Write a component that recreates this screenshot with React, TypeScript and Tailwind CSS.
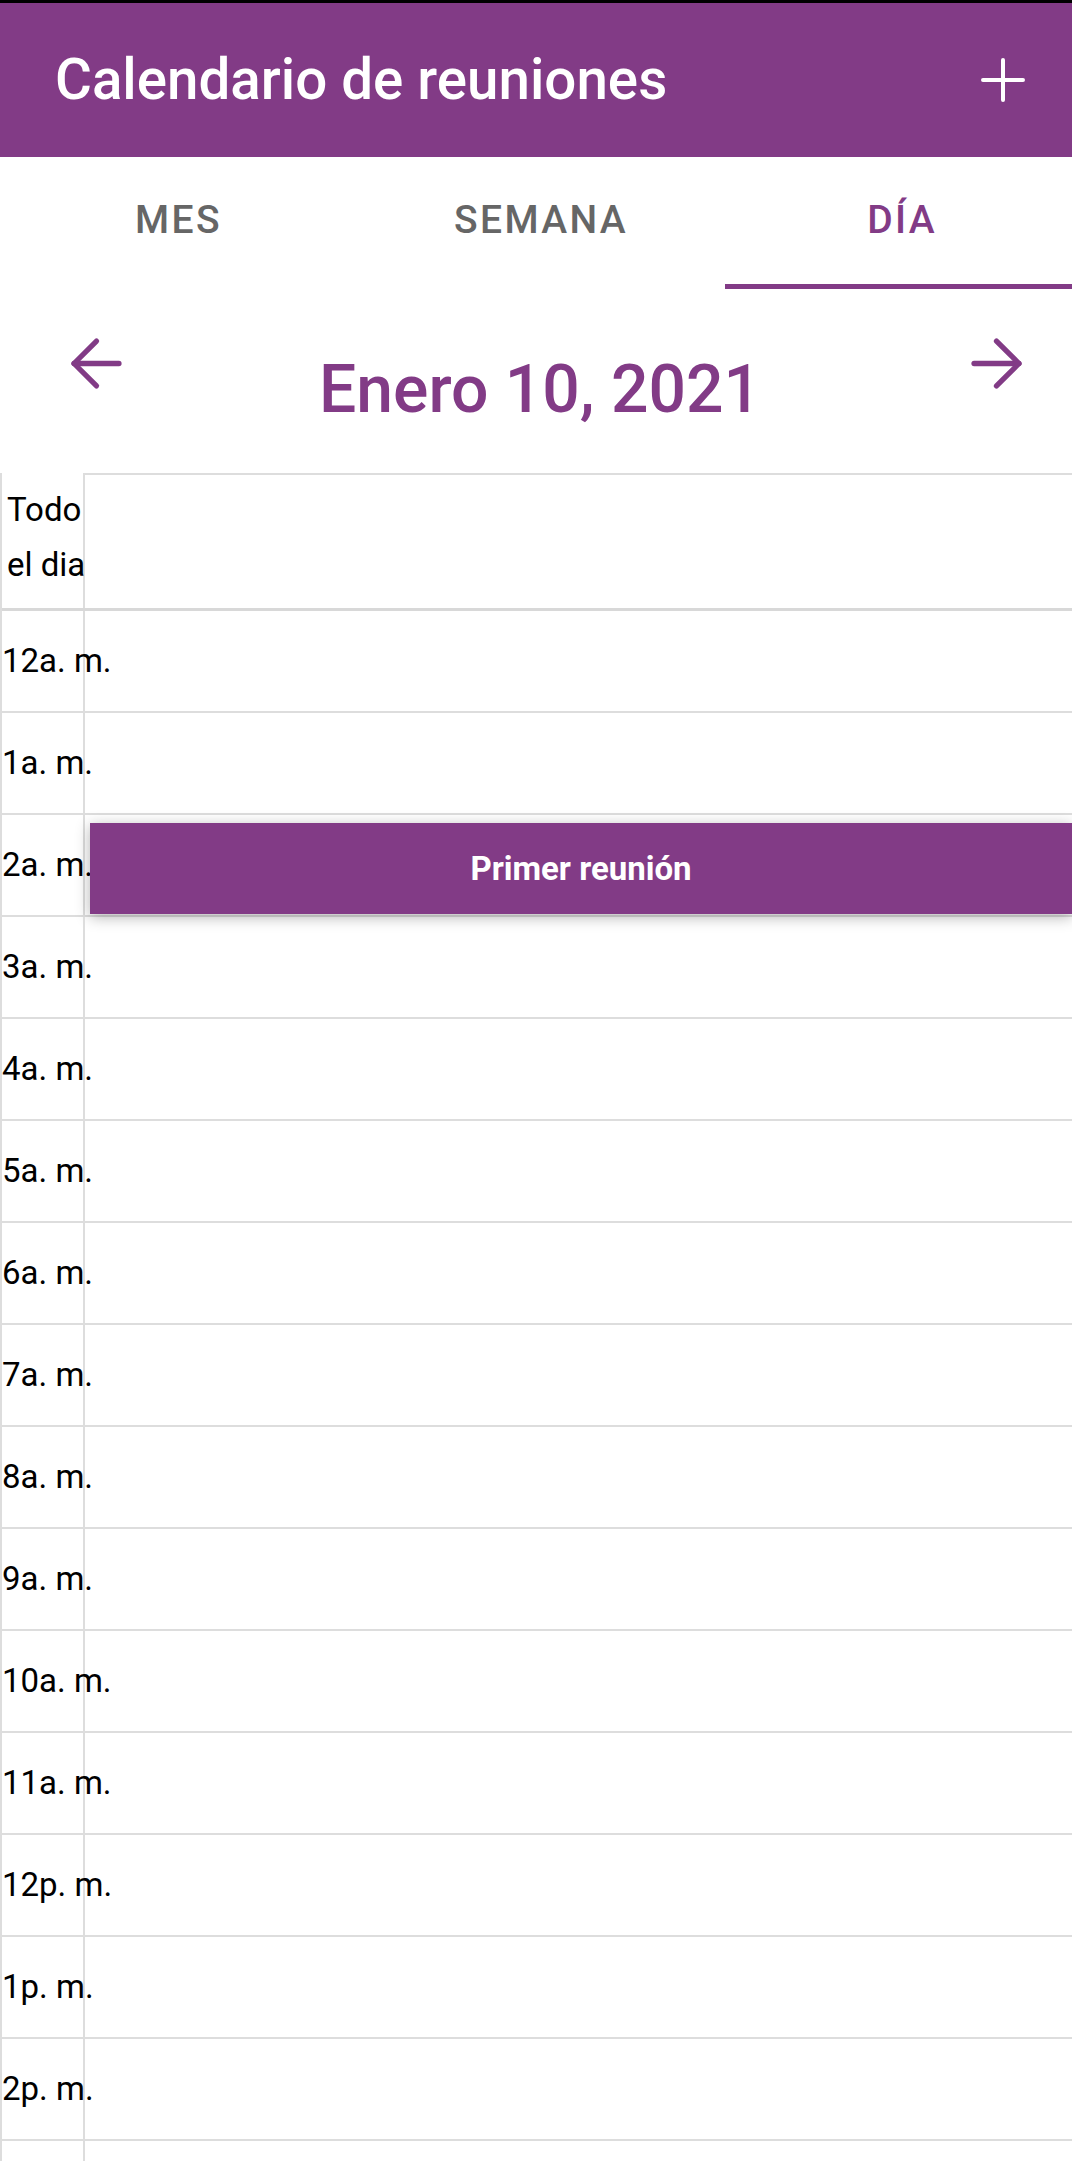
import { ArrowLeft, ArrowRight } from 'lucide-react';

const hours = [
  '12a. m.', '1a. m.', '2a. m.', '3a. m.', '4a. m.', '5a. m.', '6a. m.', '7a. m.',
  '8a. m.', '9a. m.', '10a. m.', '11a. m.', '12p. m.', '1p. m.', '2p. m.', '3p. m.',
  '4p. m.', '5p. m.', '6p. m.', '7p. m.', '8p. m.', '9p. m.', '10p. m.', '11p. m.',
];

const tabs = [
  { label: 'MES', active: false },
  { label: 'SEMANA', active: false },
  { label: 'DÍA', active: true },
];

export default function App() {
  return (
    <div className="flex h-screen flex-col overflow-hidden bg-white font-['Roboto',sans-serif]">
      <div className="h-[3px] bg-black" />

      <header className="flex h-[154px] shrink-0 items-center justify-between bg-[#823b86] pl-[55px] pr-[47px]">
        <h1 className="text-[56.5px] font-medium leading-none text-white">Calendario de reuniones</h1>
        <button className="text-white">
          <svg width="44" height="44" viewBox="0 0 44 44">
            <path d="M22 2v40M2 22h40" stroke="currentColor" strokeWidth="4" strokeLinecap="round" />
          </svg>
        </button>
      </header>

      <nav className="grid h-[132px] shrink-0 grid-cols-[357px_368px_1fr]">
        {tabs.map((tab) => (
          <div key={tab.label} className="flex flex-col">
            <div
              className={
                tab.active
                  ? 'flex flex-1 items-center justify-center pl-[7px] text-[39px] font-medium leading-none tracking-[0.06em] text-[#823b86]'
                  : 'flex flex-1 items-center justify-center text-[39px] font-medium leading-none tracking-[0.06em] text-[#666666]'
              }
            >
              {tab.label}
            </div>
            <div className={tab.active ? 'h-[5px] bg-[#823b86]' : 'h-[5px]'} />
          </div>
        ))}
      </nav>

      <div className="grid h-[184px] shrink-0 grid-cols-[1fr_auto_1fr] items-start pt-[36px] text-[#823b86]">
        <div className="pl-[58px]">
          <ArrowLeft size={77} strokeWidth={1.65} />
        </div>
        <h2 className="mt-[32px] pl-[8px] text-[66px] font-medium leading-none">Enero 10, 2021</h2>
        <div className="flex justify-end pr-[37px]">
          <ArrowRight size={77} strokeWidth={1.65} />
        </div>
      </div>

      <div className="flex-1 overflow-hidden border-l-2 border-[#dddddd] text-black">
        <div className="flex h-[138px] border-b-[3px] border-[#d8d8d8]">
          <div className="flex w-[83px] items-center whitespace-nowrap border-r-2 border-[#dddddd] pb-[8px] pl-[5px] text-[33px] leading-[55px]">
            <span>
              Todo
              <br />
              el dia
            </span>
          </div>
          <div className="flex-1 border-t-2 border-[#dddddd]" />
        </div>

        {hours.map((h, i) => (
          <div key={h} className="flex h-[102px] border-b-2 border-[#dddddd]">
            <div className="flex w-[83px] items-center whitespace-nowrap border-r-2 border-[#dddddd] text-[33px]">
              {h}
            </div>
            <div className="flex-1 pl-[5px] pt-[8px]">
              {i === 2 && (
                <div className="flex h-[91px] items-center justify-center bg-[#823b86] text-[33px] font-bold text-white shadow-[0_3px_14px_rgba(0,0,0,0.3)]">
                  Primer reunión
                </div>
              )}
            </div>
          </div>
        ))}
      </div>
    </div>
  );
}
